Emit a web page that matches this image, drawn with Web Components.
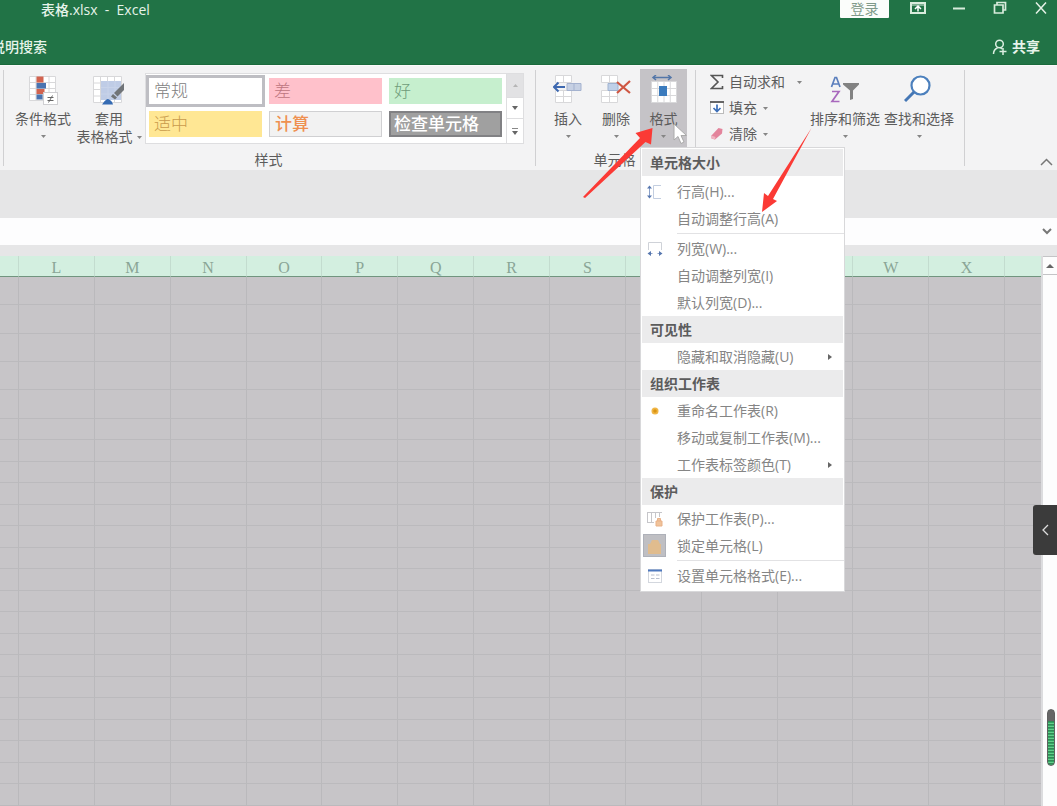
<!DOCTYPE html>
<html lang="zh-CN">
<head>
<meta charset="utf-8">
<title>表格.xlsx - Excel</title>
<style>
  html, body { margin: 0; height: 100%; }
  body { font: 14px/18px "Open Sans", "Noto Sans CJK SC", sans-serif; color: #5c5c5c; overflow: hidden; }
</style>
</head>
<body>
<excel-app></excel-app>
<script>
const define = (name, html, setup) => {
  const template = document.createElement('template');
  template.innerHTML = '<style>*{box-sizing:border-box}button{font:inherit;color:inherit;background:none;border:0;padding:0;margin:0}svg{display:block}</style>' + html;
  customElements.define(name, class extends HTMLElement {
    constructor() {
      super();
      this.attachShadow({ mode: 'open' }).append(template.content.cloneNode(true));
    }
    connectedCallback() { if (setup) setup(this, this.shadowRoot); }
  });
};

const caret = '<svg class="caret" width="5" height="3" viewBox="0 0 5 3" aria-hidden="true"><path d="M0 0h5L2.5 3z" fill="#858585"/></svg>';
const grid = (x, y, w, h, c, r) => {
  let d = '';
  for (let i = 0; i <= c; i++) d += `M${x + i * w} ${y}v${h * r}`;
  for (let j = 0; j <= r; j++) d += `M${x} ${y + j * h}h${w * c}`;
  return `<rect x="${x}" y="${y}" width="${w * c}" height="${h * r}" fill="#fff"/><path d="${d}" stroke="#d8d8da" fill="none"/>`;
};
const svg = (w, h, body, extra = '') => `<svg ${extra} width="${w}" height="${h}" viewBox="0 0 ${w} ${h}" aria-hidden="true">${body}</svg>`;

const icons = {
  conditional: svg(30, 30, grid(1.5, 1.5, 6.5, 6, 4, 4) +
    '<path d="M8.500 1.500h7v6h-7zM8.500 14h8v5h-8z" fill="#d2634f"/><path d="M8.500 8h9.500v5.500h-9.500zM8.500 19.500h6v5h-6z" fill="#4a73b0"/><rect x="15.500" y="17.500" width="14" height="12" fill="#fff" stroke="#cfcfd2"/><path d="M19.500 22.500h6M19.500 25.500h6M24.500 20.500l-4 7" stroke="#666" fill="none"/>'),
  table: svg(32, 30, grid(.5, 1.5, 7, 6.500, 4, 4) +
    '<path d="M8 6h20v19H8z" fill="#bfcce6"/><path d="M15 6v19M22 6v19M8 12.500h20M8 19h20" stroke="#c8d3e9"/><path d="M31 8v7l-6.500 6.500-3.500-3.500z" fill="#707478"/><path d="M20 19l4 3.500-2 2-4-3z" fill="#707478"/><path d="M9 29.500c1-1 3-5 6-5.500 3 1 4.500 3 5 5.500z" fill="#356bb3"/>'),
  insert: svg(30, 30, grid(2.5, .5, 8, 7, 2, 1) + grid(2.5, 15.5, 8, 6, 2, 2) +
    '<path d="M14 8.500h14v7H14zM21 8.500v7" fill="#c6d0e3" stroke="#a4b2cf"/><path d="M1 12h11M5.500 7.500L1 12l4.500 4.500" stroke="#3d68b0" stroke-width="2" fill="none"/>'),
  remove: svg(30, 30, grid(.5, .5, 8, 7, 2, 1) + grid(.5, 15.5, 8, 6, 2, 2) +
    '<path d="M7 8.500h10v7H7z" fill="#bfd0e8" stroke="#9fb2d0"/><path d="M16 7l13 11M29 6L16 18" stroke="#cf5642" stroke-width="2.200" fill="none"/>'),
  format: svg(30, 30, grid(2.5, 6.5, 6.250, 7, 4, 3) +
    '<path d="M10 11h8v10h-8z" fill="#3b7bbd"/><path d="M4 2.500h18M7 0L4 2.500 7 5M19 0l3 2.500L19 5" stroke="#5376a8" stroke-width="1.500" fill="none"/>'),
  sum: svg(14, 16, '<path d="M12.500 4V1.500H1.500L8 8l-6.500 6.500h11V12" stroke="#555" stroke-width="1.600" fill="none"/>'),
  fill: svg(14, 16, '<rect x=".5" y="1.500" width="13" height="12" fill="#fff" stroke="#bbb"/><path d="M0 2h14" stroke="#666" stroke-width="2"/><path d="M7 4.500v7M3.500 8L7 11.500 10.500 8" stroke="#3d6fb8" stroke-width="1.700" fill="none"/>'),
  clear: svg(14, 16, '<path d="M1.500 9.500L8.500 2l4 1-.5 4.500-7 6-3.500-1z" fill="#e3849c"/><path d="M1.500 9.500l4 1.500-.5 2.500-3.500-1z" fill="#f0b4c1"/>'),
  sort: svg(30, 30, '<path d="M1.500 12L5 2.500h1.500L10 12M3 9h5.500" stroke="#5b7fbd" stroke-width="1.700" fill="none"/><path d="M2 16.500h7L2 26.500h7.500" stroke="#a868bd" stroke-width="1.700" fill="none"/><path d="M13 8h16v1.500l-6 6V24l-3 1v-9.500L13 9.500z" fill="#828282"/>'),
  find: svg(30, 30, '<circle cx="16.500" cy="10.500" r="9" fill="#fff" stroke="#4c80bd" stroke-width="2.200"/><path d="M10 17L1 26" stroke="#4577b5" stroke-width="3"/>'),
  rowHeight: svg(16, 16, '<path d="M2.500 4v8" stroke="#8ba1c8"/><path d="M0 4.500l2.500-3 2.500 3zM0 11.500l2.500 3 2.500-3z" fill="#5878b0"/><path d="M14 1.500H6.500v13H14" stroke="#c3cee0" fill="none"/>'),
  colWidth: svg(16, 16, '<path d="M1.500 9V1.500h13V9" stroke="#cfd2d8" fill="none"/><path d="M1 12.500h4.500M10.500 12.500H15" stroke="#8ba1c8"/><path d="M4 10l-3.500 2.500L4 15zM12 10l3.500 2.500L12 15z" fill="#5878b0"/>'),
  dot: svg(16, 16, '<circle cx="8" cy="8" r="3.500" fill="#f0b545"/><circle cx="8" cy="8" r="1.800" fill="#d99412"/>'),
  protect: svg(16, 16, '<path d="M.5 1v11M4.500 1v11M8.500 1v6M12.500 1v5M0 1.500h15M0 11.500h7" stroke="#c6c6ca" fill="none"/><path d="M9 10h6v5H9zM10.500 10V7.500h3V10" fill="#f0c39b" stroke="#e9b187"/>'),
  lock: svg(24, 24, '<rect x=".5" y=".5" width="22" height="22" fill="#bfbfc3" stroke="#aeb1b9"/><path d="M5 10h2l2-4h6l2 4h1v10H5z" fill="#e0bc8e"/>'),
  cells: svg(16, 16, '<rect x="1.500" y="1.500" width="13" height="13" fill="#fff" stroke="#d3d7de"/><path d="M1 2.500h14" stroke="#4e79bf" stroke-width="2"/><path d="M4 7h3.500M9 7h3.500M4 10.500h3.500M9 10.500h3.500" stroke="#b9c0ce"/>')
};
const icon = name => `<span slot="icon">${icons[name]}</span>`;

define('title-bar', `
<style>
  :host { display: block; background: #217346; color: #e6f3ea; height: 65px; border-bottom: 1px solid #1a6a3c; overflow: hidden; }
  .row { display: flex; align-items: center; }
  .top { height: 19px; padding-left: 41px; }
  h1 { font: inherit; font-weight: 500; margin: 0; flex: 1; white-space: pre; }
  .login { background: #fbfdfb; color: #7f9a8a; width: 49px; height: 18px; line-height: 16px; margin-right: 21px; border-radius: 0 0 1px 1px; align-self: flex-start; }
  .win { width: 16px; height: 16px; margin-right: 25px; align-self: flex-start; }
  .win:last-child { margin-right: 8px; }
  .tabs { height: 56px; justify-content: space-between; padding-right: 17px; }
  .tell { margin-left: -9px; font-weight: 500; }
  .share { display: flex; align-items: center; gap: 4px; font-weight: 700; }
</style>
<div class="row top">
  <h1>表格.xlsx  -  Excel</h1>
  <button class="login">登录</button>
  <button class="win" aria-label="功能区显示选项">${svg(16, 14, '<path d="M1 2h14v10H1z" fill="none" stroke="#d8ecdc" stroke-width="2"/><path d="M0 4h16" stroke="#d8ecdc"/><path d="M8 5.500v5M5 8l3-3 3 3" stroke="#fff" stroke-width="1.500" fill="none"/>')}</button>
  <button class="win" aria-label="最小化">${svg(16, 14, '<path d="M2 7.500h12" stroke="#d8ecdc" stroke-width="2"/>')}</button>
  <button class="win" aria-label="还原">${svg(16, 14, '<path d="M5 4V1.500h8.500V9H11M2.500 4H11v8H2.500z" fill="none" stroke="#d8ecdc" stroke-width="1.700"/>')}</button>
  <button class="win" aria-label="关闭">${svg(16, 14, '<path d="M3 1.500l10 11M13 1.500l-10 11" stroke="#e4f1e6" stroke-width="1.500"/>')}</button>
</div>
<div class="row tabs">
  <span class="tell">说明搜索</span>
  <button class="share">${svg(16, 16, '<circle cx="7.500" cy="5" r="3.800" fill="none" stroke="#dcefe1" stroke-width="1.500"/><path d="M1.500 15c0-3 1.500-5 4-6M8.500 9l1.500 1M7.500 12.500h7M11 9v7" fill="none" stroke="#dcefe1" stroke-width="1.500"/>')}共享</button>
</div>`);

define('ribbon-group', `
<style>
  :host { display: flex; flex-direction: column; flex: none; position: relative; border-right: 1px solid #d0d0d2; margin: 4px 0; height: 96px; }
  .body { display: flex; height: 80px; margin-top: -1px; }
  .label { text-align: center; line-height: 18px; margin-top: 2px; padding-right: 2px; }
</style>
<div class="body"><slot></slot></div>
<div class="label"></div>`, (el, root) => { root.querySelector('.label').textContent = el.getAttribute('label') || ''; });

define('big-button', `
<style>
  :host { display: block; flex: none; }
  button { width: 100%; height: 80px; padding-top: 6px; display: flex; flex-direction: column; align-items: center; white-space: nowrap; }
  .icon { height: 30px; margin-bottom: 5px; }
  .text { line-height: 18px; }
  .caret { margin-top: 7px; }
  :host([inline-caret]) .caret { display: none; }
  :host([pressed]) button { background: #c5c3c7; }
</style>
<button><span class="icon"><slot name="icon"></slot></span><span class="text"><slot></slot></span>${caret}</button>`);

define('small-button', `
<style>
  :host { display: block; }
  button { display: flex; align-items: center; height: 26px; gap: 5px; white-space: nowrap; }
  .caret { margin-left: 1px; }
  :host([wide]) .caret { margin-left: 7px; }
</style>
<button><slot name="icon"></slot><slot></slot>${caret}</button>`);

define('style-gallery', `
<style>
  :host { display: flex; flex: none; height: 71px; border: 1px solid #dedee0; background: #fff; }
  .tiles { display: grid; grid-template-columns: repeat(3, 113px); grid-template-rows: 26px 26px; gap: 7px; padding: 4px 0 0 3px; flex: 1; }
  .tiles button { text-align: left; padding-left: 5px; font-size: 17px; line-height: 24px; font-weight: 300; }
  .normal { outline: 3px solid #bebec3; outline-offset: 0; color: #808080; background: #fff; }
  .bad { background: #ffc1cb; color: #bd7580; }
  .good { background: #c6efce; color: #6f9c79; }
  .neutral { background: #ffe794; color: #c99b4c; }
  .tiles .calc { background: #f2f2f2; border: 1px solid #d0d0d2; color: #ef9050; font-weight: 500; line-height: 22px; }
  .tiles .check { background: #a0a0a0; border: 2px solid #818184; color: #fff; font-weight: 500; padding-left: 3px; line-height: 20px; }
  .scroll { width: 17px; display: grid; grid-template-rows: 24px 21px 24px; border-left: 1px solid #dedee0; }
  .scroll button { display: grid; place-items: center; border-bottom: 1px solid #dedee0; }
  .scroll button:first-child { background: #e2e2e4; }
  .scroll button:last-child { border: 0; }
</style>
<div class="tiles">
  <button class="normal">常规</button><button class="bad">差</button><button class="good">好</button>
  <button class="neutral">适中</button><button class="calc">计算</button><button class="check">检查单元格</button>
</div>
<div class="scroll">
  <button aria-label="上一行">${svg(5, 3, '<path d="M0 3h5L2.500 0z" fill="#b5b5b5"/>')}</button>
  <button aria-label="下一行">${svg(6, 4, '<path d="M0 0h6L3 4z" fill="#666"/>')}</button>
  <button aria-label="其他">${svg(6, 7, '<path d="M0 .5h6" stroke="#888"/><path d="M0 3h6L3 7z" fill="#666"/>')}</button>
</div>`);

define('menu-heading', `
<style>
  :host { display: block; height: 27px; line-height: 27px; padding-left: 8px; margin: 0 1px; background: #ebebec; color: #5c5c5c; font-weight: 700; }
</style><slot></slot>`);

define('menu-entry', `
<style>
  :host { display: block; color: #858585; }
  button { display: grid; grid-template-columns: 24px 1fr 10px; align-items: center; column-gap: 10px; width: 100%; height: 27px; padding: 0 6px 0 2px; text-align: left; white-space: nowrap; }
  .icon { display: grid; place-items: center; }
  .more { display: none; }
  :host([submenu]) .more { display: block; }
  :host([divided]) { padding-bottom: 3px; background: linear-gradient(#e2e2e4, #e2e2e4) 36px 100% / 100% 1px no-repeat; background-position: 36px calc(100% - 1px); }
</style>
<button role="menuitem"><span class="icon"><slot name="icon"></slot></span><span><slot></slot></span>${svg(5, 8, '<path d="M0 1l4 3-4 3z" fill="#666"/>', 'class="more"')}</button>`);

define('format-menu', `
<style>
  :host { display: block; width: 205px; padding: 1px 0 2px; background: #fff; border: 1px solid #d8d8da; }
  .first { margin-bottom: 2px; }
</style>
<div role="menu" aria-label="格式">
  <menu-heading class="first">单元格大小</menu-heading>
  <menu-entry>${icon('rowHeight')}行高(H)...</menu-entry>
  <menu-entry divided>自动调整行高(A)</menu-entry>
  <menu-entry>${icon('colWidth')}列宽(W)...</menu-entry>
  <menu-entry>自动调整列宽(I)</menu-entry>
  <menu-entry>默认列宽(D)...</menu-entry>
  <menu-heading>可见性</menu-heading>
  <menu-entry submenu>隐藏和取消隐藏(U)</menu-entry>
  <menu-heading>组织工作表</menu-heading>
  <menu-entry>${icon('dot')}重命名工作表(R)</menu-entry>
  <menu-entry>移动或复制工作表(M)...</menu-entry>
  <menu-entry submenu>工作表标签颜色(T)</menu-entry>
  <menu-heading>保护</menu-heading>
  <menu-entry>${icon('protect')}保护工作表(P)...</menu-entry>
  <menu-entry divided>${icon('lock')}锁定单元格(L)</menu-entry>
  <menu-entry>${icon('cells')}设置单元格格式(E)...</menu-entry>
</div>`);

define('ribbon-bar', `
<style>
  :host { display: flex; position: relative; z-index: 2; height: 105px; background: #f3f3f4; border-top: 1px solid #fafafa; }
  .edge { flex: none; width: 4px; margin: 4px 0; border-right: 1px solid #d0d0d2; }
  .styles { width: 532px; }
  .cells { width: 160px; }
  .edit { width: 269px; }
  .cond { width: 62px; margin-left: 8px; }
  .tbl { width: 66px; margin-left: 2px; }
  style-gallery { width: 379px; margin: 4px 0 0 3px; }
  .ins { margin-left: 8px; }
  .ins, .del, .fmt { width: 48px; }
  .fmt { width: 47px; }
  .two { display: block; text-align: center; }
  .line { display: flex; align-items: center; justify-content: center; gap: 4px; }
  .tools { width: 98px; margin-left: 14px; }
  .find, .sort { width: 74px; }
  format-menu { position: absolute; left: 104px; top: 77px; }
  .cursor { position: absolute; left: 137px; top: 53px; }
  .collapse { margin: auto 4px 4px auto; }
</style>
<div class="edge"></div>
<ribbon-group class="styles" label="样式">
  <big-button class="cond">${icon('conditional')}条件格式</big-button>
  <big-button class="tbl" inline-caret>${icon('table')}<span class="two">套用</span><span class="line">表格格式${caret}</span></big-button>
  <style-gallery></style-gallery>
</ribbon-group>
<ribbon-group class="cells" label="单元格">
  <big-button class="ins">${icon('insert')}插入</big-button>
  <big-button class="del">${icon('remove')}删除</big-button>
  <big-button class="fmt" pressed>${icon('format')}格式</big-button>
  <format-menu></format-menu>
  ${svg(14, 22, '<path d="M1 1v16l4-3.500 3 7 3-1.500-3-6.500h5.500z" fill="#fff" stroke="#aaa"/>', 'class="cursor"')}
</ribbon-group>
<ribbon-group class="edit">
  <div class="tools">
    <small-button wide>${icon('sum')}自动求和</small-button>
    <small-button>${icon('fill')}填充</small-button>
    <small-button>${icon('clear')}清除</small-button>
  </div>
  <big-button class="sort">${icon('sort')}排序和筛选</big-button>
  <big-button class="find">${icon('find')}查找和选择</big-button>
</ribbon-group>
<button class="collapse" aria-label="折叠功能区">${svg(13, 8, '<path d="M1 7l5.500-5.500L12 7" stroke="#777" stroke-width="1.500" fill="none"/>')}</button>`);

define('formula-bar', `
<style>
  :host { display: flex; background: #fdfdfe; height: 27px; margin: 48px 0 11px; }
  input { flex: 1; min-width: 0; border: 0; background: none; font: inherit; outline: 0; }
  button { margin-right: 5px; }
</style>
<input aria-label="编辑栏"><button aria-label="展开编辑栏">${svg(10, 7, '<path d="M1 1l4 4 4-4" stroke="#777" stroke-width="2" fill="none"/>')}</button>`);

define('sheet-grid', `
<style>
  :host { display: block; flex: 1; min-width: 0; min-height: 0; }
  table { display: grid; height: 100%; grid-template-columns: 19fr repeat(13, 76fr) 36fr; grid-template-rows: 21px repeat(5, 142fr) repeat(18, 108fr); }
  thead, tbody, tr { display: contents; }
  th { background: #d3efe0; border-right: 1px solid #c3dccf; border-bottom: 1px solid #71957f; font: 16px/24px "Liberation Serif", serif; color: #8aa596; padding: 0; overflow: hidden; }
  td { background: #c7c5c8; border-right: 1px solid #bab9bc; border-bottom: 1px solid #bbbabd; padding: 0; }
  th:last-child, td:last-child { border-right: 0; }
</style>
<table><thead></thead><tbody></tbody></table>`, (el, root) => {
  // T, U and V stay blank while the open menu lies over them
  const covered = 'TUV';
  const letters = ['', ...'LMNOPQRSTUVWX', ''];
  root.querySelector('thead').innerHTML = '<tr>' + letters.map(c => covered.includes(c) && c ? `<th scope="col" aria-label="${c}"></th>` : `<th scope="col">${c}</th>`).join('') + '</tr>';
  root.querySelector('tbody').innerHTML = ('<tr>' + '<td></td>'.repeat(letters.length) + '</tr>').repeat(23);
});

define('sheet-scroll', `
<style>
  :host { display: flex; flex-direction: column; width: 16px; background: #fdfdfd; border-left: 2px solid #dcdcde; }
  button { height: 19px; display: grid; place-items: center; border: 1px solid #c4c4c6; border-width: 1px 0; }
</style>
<button aria-label="向上滚动">${svg(8, 4, '<path d="M0 4h8L4 0z" fill="#666"/>')}</button>`);

define('side-widgets', `
<style>
  .tab { position: fixed; right: 0; top: 505px; width: 24px; height: 50px; background: #3b3b3b; border-radius: 3px 0 0 3px; display: grid; place-items: center; }
  .meter { position: fixed; right: 2px; top: 709px; width: 8px; height: 57px; border-radius: 4px; border: 1px solid #606060; background: linear-gradient(#666 11px, transparent 11px), repeating-linear-gradient(#35a463 0 1px, #63cf8b 1px 2px, #338956 2px 3px); }
  :host { position: relative; z-index: 3; }
</style>
<button class="tab" aria-label="展开侧栏">${svg(8, 12, '<path d="M7 1L2 6l5 5" stroke="#ddd" stroke-width="1.300" fill="none"/>')}</button>
<div class="meter"></div>`);

define('pointer-arrows', `
<style>
  :host { position: absolute; left: 0; top: 0; z-index: 4; pointer-events: none; }
</style>
${svg(830, 220, '<path d="M583 197L640 138 635.500 133 652.500 128 651 144.500 645.500 142 585 198zM811.500 128L768 196 764 193 762 212 777 201 773 199z" fill="#fb3a35"/>')}`);

define('excel-app', `
<style>
  :host { display: flex; flex-direction: column; position: relative; height: 100vh; background: #e6e6e7; overflow: hidden; }
  title-bar, ribbon-bar, formula-bar { flex: none; }
  main { display: flex; flex: 1; min-height: 0; }
</style>
<title-bar></title-bar>
<ribbon-bar></ribbon-bar>
<formula-bar></formula-bar>
<main><sheet-grid></sheet-grid><sheet-scroll></sheet-scroll></main>
<side-widgets></side-widgets>
<pointer-arrows></pointer-arrows>`);
</script>
</body>
</html>
